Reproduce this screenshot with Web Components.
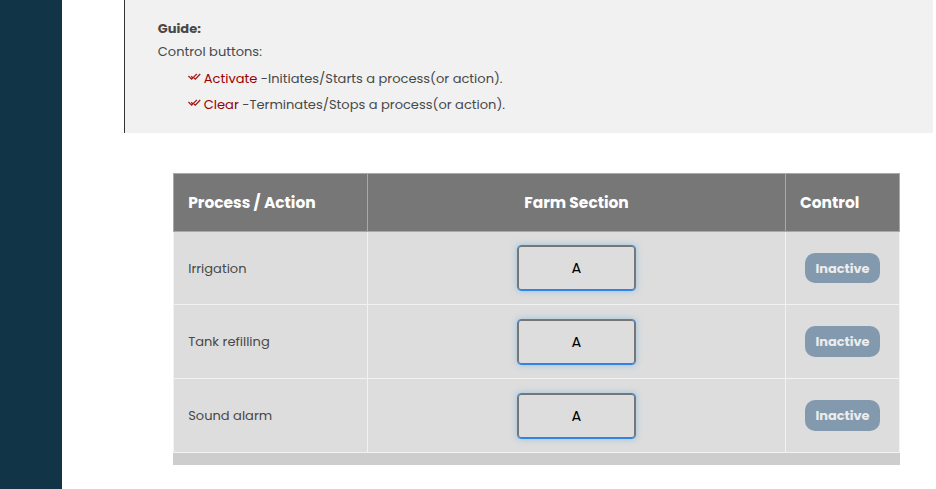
<!DOCTYPE html>
<html lang="en"><head><meta charset="utf-8"><title>Farm control</title>
<style>html,body{margin:0;height:489px;overflow:hidden;background:#fff}body{font-family:Poppins,Inter,"Open Sans",sans-serif;font-size:13.03px;color:#484848}</style></head><body>
<farm-app></farm-app>
<script>
class GuideItem extends HTMLElement{
  connectedCallback(){
    const a=n=>this.getAttribute(n);
    this.attachShadow({mode:'open'}).innerHTML=`<style>
    :host{display:flex;height:26px;line-height:26px;align-items:center;padding-left:30px;white-space:pre}
    svg{width:13px;height:8px;margin:-5px 3px 0 0;flex:none}.k{color:#990000}</style>
    <svg viewBox="0 0 13 8" fill="none" stroke="#a31919" stroke-width="1.3"><path d="M.4 3 3.6 6.2 8.9.9M3.2 3.2 4.5 4.5M5.9 4.9 7.3 6.2 12.2 1"/></svg><span class="k">${a('label')}</span><span> ${a('text')}</span>`;
  }
}
customElements.define('guide-item',GuideItem);

class GuidePanel extends HTMLElement{
  connectedCallback(){
    this.attachShadow({mode:'open'}).innerHTML=`<style>
    :host{display:block;box-sizing:border-box;height:133px;width:809px;margin-left:62px;border-left:1px solid #333;background:#f1f1f1;padding:17px 0 0 32.8px}
    div{height:23px;line-height:23px}b{font-weight:700;font-size:13.03px}div+div{margin-bottom:3px}</style>
    <div><b>Guide:</b></div><div>Control buttons:</div><slot></slot>`;
  }
}
customElements.define('guide-panel',GuidePanel);

class SectionSelect extends HTMLElement{
  connectedCallback(){
    this.attachShadow({mode:'open'}).innerHTML=`<style>
    :host{display:grid;place-items:center;box-sizing:border-box;width:119px;height:46px;border:1px solid #3584e4;border-radius:4px;box-shadow:inset 0 0 0 1px #767676,0 0 6px rgba(81,167,220,.5);color:#000;font-size:14.5px}</style><span><slot></slot></span>`;
  }
}
customElements.define('section-select',SectionSelect);

class StatusButton extends HTMLElement{
  connectedCallback(){
    this.attachShadow({mode:'open'}).innerHTML=`<style>
    :host{display:grid;place-items:center;width:75px;height:30.5px;border-radius:10px;background:#839aae;color:#ececec;font-size:12.9px;font-weight:700}span{padding-top:1px}</style><span>Inactive</span>`;
  }
}
customElements.define('status-button',StatusButton);

class ProcessTable extends HTMLElement{
  connectedCallback(){
    const rows=['Irrigation','Tank refilling','Sound alarm'];
    this.attachShadow({mode:'open'}).innerHTML=`<style>
    :host{display:block;width:727px;margin:40px 0 0 111px;border-bottom:12px solid #cdcdcd}
    .r{display:grid;box-sizing:border-box;grid-template-columns:194px 418px 114px;height:74px;background:#ddd;border-left:1px solid #f2f2f2;border-bottom:1px solid #f2f2f2;line-height:20px}
    .r>div{display:flex;align-items:center;box-sizing:border-box;border-right:1px solid #f2f2f2;padding-left:14.2px}
    .r>div:nth-child(2){justify-content:center;padding:0}.r>div:nth-child(3){padding-left:19px}
    .h{height:59px;background:#777;border:1px solid #a9a9a9;border-right:0;color:#fff;font-size:15.45px;font-weight:700}
    .h>div{border-color:#a9a9a9}.h>div:nth-child(3){padding-left:14px}.h+.r{height:73px}.h+.r>div:first-child{padding-top:1px}</style>
    <div class="r h"><div>Process / Action</div><div>Farm Section</div><div>Control</div></div>
    ${rows.map(t=>`<div class="r"><div>${t}</div><div><section-select>A</section-select></div><div><status-button></status-button></div></div>`).join('')}`;
  }
}
customElements.define('process-table',ProcessTable);

class FarmApp extends HTMLElement{
  connectedCallback(){
    this.attachShadow({mode:'open'}).innerHTML=`<style>:host{display:grid;grid-template-columns:62px 874px;height:489px}aside{background:#123447}</style>
    <aside></aside><main><guide-panel>
    <guide-item label="Activate" text="-Initiates/Starts a process(or action)."></guide-item>
    <guide-item label="Clear" text="-Terminates/Stops a process(or action)."></guide-item>
    </guide-panel><process-table></process-table></main>`;
  }
}
customElements.define('farm-app',FarmApp);
</script></body></html>
